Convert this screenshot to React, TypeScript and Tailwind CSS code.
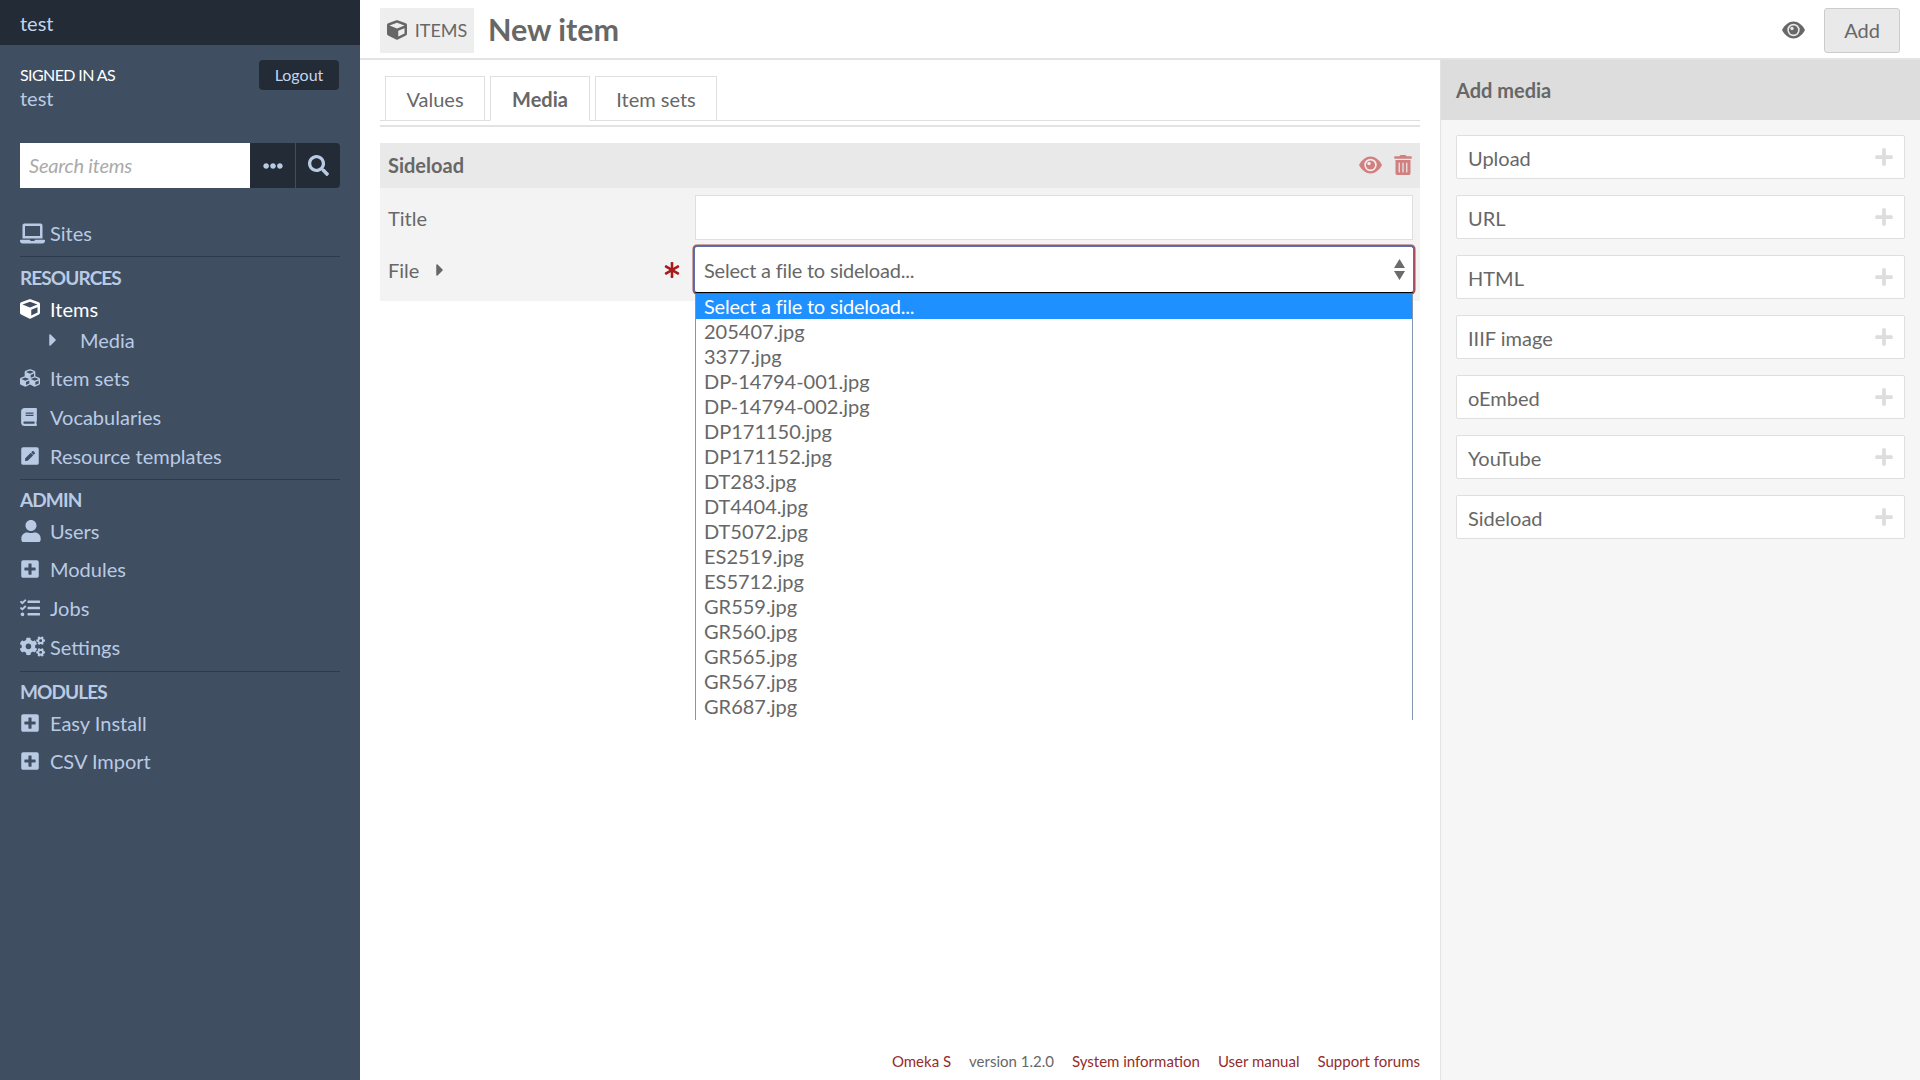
import { type ReactNode } from 'react';
import {
  FaBook,
  FaCaretRight,
  FaCogs,
  FaCube,
  FaCubes,
  FaEllipsisH,
  FaLaptop,
  FaPenSquare,
  FaPlus,
  FaPlusSquare,
  FaSearch,
  FaTasks,
  FaTrashAlt,
  FaUser,
  FaAsterisk,
} from 'react-icons/fa';

const files = [
  '205407.jpg',
  '3377.jpg',
  'DP-14794-001.jpg',
  'DP-14794-002.jpg',
  'DP171150.jpg',
  'DP171152.jpg',
  'DT283.jpg',
  'DT4404.jpg',
  'DT5072.jpg',
  'ES2519.jpg',
  'ES5712.jpg',
  'GR559.jpg',
  'GR560.jpg',
  'GR565.jpg',
  'GR567.jpg',
  'GR687.jpg',
];

const mediaTypes = ['Upload', 'URL', 'HTML', 'IIIF image', 'oEmbed', 'YouTube', 'Sideload'];

// almond with a ring and an off-centre pupil, the admin theme's eye
function EyeIcon({ className }: { className?: string }) {
  return (
    <svg width="23" height="18" viewBox="0 0 23 18" className={className}>
      <path d="M0 9 C3 3.5 7 0.5 11.5 0.5 C16 0.5 20 3.5 23 9 C20 14.5 16 17.5 11.5 17.5 C7 17.5 3 14.5 0 9 Z" fill="currentColor" />
      <circle cx="11.5" cy="9" r="6.2" fill="#ffffff" fillOpacity="0.85" />
      <circle cx="11.5" cy="9" r="4.6" fill="currentColor" />
      <circle cx="10" cy="7.5" r="1.7" fill="#ffffff" fillOpacity="0.85" />
    </svg>
  );
}

function NavRow({ icon, label, active }: { icon: ReactNode; label: string; active?: boolean }) {
  return (
    <div className={`flex h-[38.6px] items-center ${active ? 'text-white' : 'text-[#b9cbe4]'}`}>
      <span className="flex w-[30px] shrink-0 items-center">{icon}</span>
      <span>{label}</span>
    </div>
  );
}

function NavHeading({ children }: { children: ReactNode }) {
  return <div className="mt-[8.5px] flex h-[23px] items-center text-[19px] font-bold tracking-[-0.9px] text-[#b9cbe4]">{children}</div>;
}

function Sidebar() {
  return (
    <aside className="h-screen w-[360px] shrink-0 bg-[#404e61] text-[20px]">
      <div className="flex h-[45px] items-center bg-[#232b36] pl-5 text-[#c3d5ec]">test</div>

      <div className="flex justify-between pl-5 pr-[21px] pt-[15px]">
        <div>
          <div className="flex h-[30px] items-center text-[16px] tracking-[-0.6px] text-white">SIGNED IN AS</div>
          <div className="flex h-[16px] items-center text-[#b9cbe4]">test</div>
        </div>
        <button className="h-[30px] w-[80px] rounded bg-[#232b36] text-[16px] text-[#c3d5ec]">Logout</button>
      </div>

      <div className="mt-[37px] flex h-[45px] px-5">
        <div className="flex w-[230px] items-center bg-white pb-[2px] pl-[9px] text-[20px] italic tracking-[-0.2px] text-[#aaaaaa]">Search items</div>
        <button className="flex w-[45px] items-center justify-center bg-[#232b36] text-[#b9cbe4]">
          <FaEllipsisH size={20} />
        </button>
        <button className="ml-[1px] flex w-[44px] items-center justify-center rounded-r bg-[#232b36] text-[#b9cbe4]">
          <FaSearch size={21} />
        </button>
      </div>

      <nav className="mt-[26px] px-5">
        <div className="border-b border-[#2e3a4a] pb-[3px]">
          <NavRow icon={<FaLaptop size={25} />} label="Sites" />
        </div>
        <div className="pt-[2px]">
          <NavHeading>RESOURCES</NavHeading>
        </div>
        <NavRow icon={<FaCube size={20} />} label="Items" active />
        <div className="flex h-[23.5px] items-center text-[#b9cbe4]">
          <span className="ml-[23px] flex w-[37px] shrink-0 items-center"><FaCaretRight size={20} /></span>
          Media
        </div>
        <div className="mt-[7px] border-b border-[#2e3a4a] pb-[4px]">
          <NavRow icon={<FaCubes size={20} />} label="Item sets" />
          <NavRow icon={<FaBook size={18} />} label="Vocabularies" />
          <NavRow icon={<FaPenSquare size={20} />} label="Resource templates" />
        </div>
        <NavHeading>ADMIN</NavHeading>
        <div className="border-b border-[#2e3a4a] pb-[5px]">
          <NavRow icon={<FaUser size={22} />} label="Users" />
          <NavRow icon={<FaPlusSquare size={20} />} label="Modules" />
          <NavRow icon={<FaTasks size={20} />} label="Jobs" />
          <NavRow icon={<FaCogs size={25} />} label="Settings" />
        </div>
        <NavHeading>MODULES</NavHeading>
        <NavRow icon={<FaPlusSquare size={20} />} label="Easy Install" />
        <NavRow icon={<FaPlusSquare size={20} />} label="CSV Import" />
      </nav>
    </aside>
  );
}

function Tab({ label, active, width }: { label: string; active?: boolean; width: string }) {
  return (
    <div
      className={`relative flex h-[45px] items-center justify-center border border-[#dfdfdf] ${width} ${
        active ? 'border-b-white font-bold' : ''
      }`}
    >
      {label}
    </div>
  );
}

function SideloadForm() {
  return (
    <section className="mt-[16px]">
      <div className="flex h-[45px] items-center justify-between bg-[#e9e9e9] pl-2 pr-[7px]">
        <span className="pb-[1px] font-bold">Sideload</span>
        <div className="flex items-center gap-[11px] pb-[2px] text-[#d08080]">
          <EyeIcon className="text-[#d08080]" />
          <FaTrashAlt size={20} />
        </div>
      </div>
      <div className="h-[113px] bg-[#f3f3f3] pl-2 pr-[7px]">
        <div className="flex h-[52px] items-center pt-[7px]">
          <span className="w-[307px]">Title</span>
          <div className="h-[45px] flex-1 border border-[#dfdfdf] bg-white" />
        </div>
        <div className="relative mt-[6px] flex h-[47px] items-center">
          <span className="flex w-[306px] items-center">
            <span className="w-[42px]">File</span>
            <FaCaretRight size={20} />
            <FaAsterisk size={16} className="ml-[214px] text-[#a91919]" />
          </span>
          <div className="mr-[-1px] flex h-[47px] flex-1 items-center justify-between rounded-[3px] border border-[#5b6fa8] border-b-black bg-white pl-[9px] pr-[8px] shadow-[0_0_0_1.5px_#a8505f]">
            <span className="pt-[1px] tracking-[-0.2px]">Select a file to sideload...</span>
            <svg width="11" height="21" viewBox="0 0 11 21" className="text-[#6b6b6b]">
              <path d="M5.5 0 L11 9 H0 Z M0 12 H11 L5.5 21 Z" fill="currentColor" />
            </svg>
          </div>
          <div className="absolute left-[307px] top-[48px] z-10 h-[426px] w-[718px] overflow-hidden border-x border-[#8296b0] bg-white leading-[25px]">
            <div className="h-[25px] bg-[#1e90ff] pl-2 tracking-[-0.2px] text-white">Select a file to sideload...</div>
            {files.map((f) => (
              <div key={f} className="h-[25px] pl-2">{f}</div>
            ))}
          </div>
        </div>
      </div>
    </section>
  );
}

function AddMedia() {
  return (
    <aside className="flex w-[480px] shrink-0 flex-col border-l border-[#e3e3e3] bg-[#f6f6f6]">
      <div className="flex h-[60px] items-center bg-[#dddddd] pl-[15px] font-bold">Add media</div>
      <div className="flex flex-col gap-4 pl-[15px] pr-[15px] pt-[15px]">
        {mediaTypes.map((m) => (
          <div key={m} className="flex h-[44px] items-center justify-between rounded-[2px] border border-[#dfdfdf] bg-white pl-[11px] pr-[10px]">
            <span className="pt-[1px]">{m}</span>
            <FaPlus size={20} className="mb-[1px] text-[#dddddd]" />
          </div>
        ))}
      </div>
    </aside>
  );
}

export default function App() {
  return (
    <div className="flex h-screen overflow-hidden bg-white font-['Lato',sans-serif] text-[20px] text-[#676767]">
      <Sidebar />
      <div className="flex min-w-0 flex-1 flex-col">
        <header className="flex h-[60px] shrink-0 items-center justify-between border-b-2 border-[#e3e3e3] pl-5 pr-5 pt-[2px]">
          <div className="flex items-center">
            <div className="flex h-[45px] w-[94px] items-center justify-center gap-[8px] bg-[#eeeeee] text-[18px]">
              <FaCube size={20} />
              ITEMS
            </div>
            <h1 className="ml-[14px] text-[30.5px] font-bold">New item</h1>
          </div>
          <div className="flex items-center gap-[19px]">
            <EyeIcon className="text-[#676767]" />
            <button className="h-[45px] w-[76px] rounded-[3px] border border-[#cccccc] bg-[#e9e9e9]">Add</button>
          </div>
        </header>

        <div className="flex min-h-0 flex-1">
          <main className="flex min-w-0 flex-1 flex-col pl-5 pr-5">
            <div className="mt-4 flex h-[45px] gap-[5px] border-b border-[#dfdfdf] pl-[5px]">
              <Tab label="Values" width="w-[100px]" />
              <Tab label="Media" width="w-[100px]" active />
              <Tab label="Item sets" width="w-[122px]" />
            </div>
            <div className="mt-[4px] border-b-2 border-[#e3e3e3]" />
            <SideloadForm />
            <footer className="mt-auto flex h-[38px] items-center justify-end gap-[18px] text-[15px] text-[#962b2b]">
              <span>Omeka S</span>
              <span className="text-[#676767]">version 1.2.0</span>
              <span>System information</span>
              <span>User manual</span>
              <span>Support forums</span>
            </footer>
          </main>
          <AddMedia />
        </div>
      </div>
    </div>
  );
}
